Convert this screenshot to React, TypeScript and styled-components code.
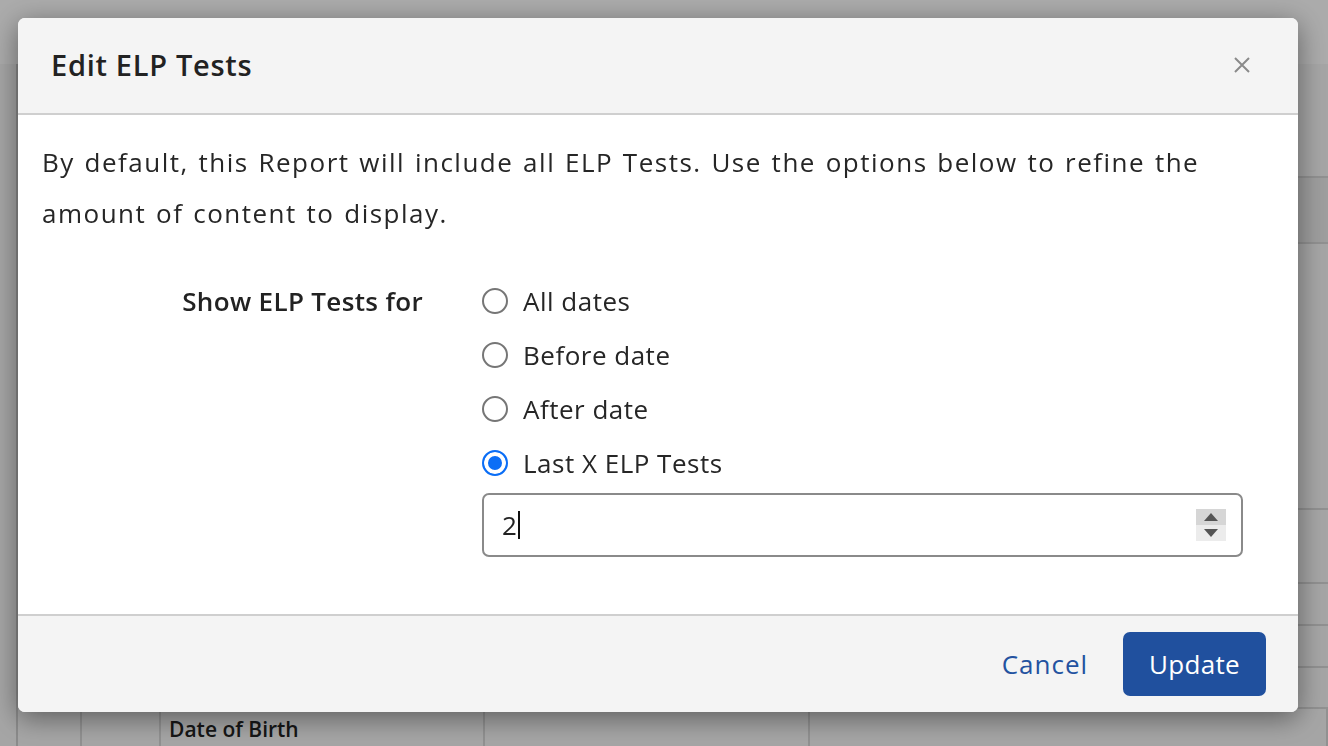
import * as React from 'react';
import styled, { createGlobalStyle } from 'styled-components';

const GlobalStyle = createGlobalStyle`
  html, body {
    margin: 0;
    padding: 0;
    height: 100%;
    overflow: hidden;
  }
  body {
    font-family: "Open Sans", Lato, "Liberation Sans", sans-serif;
    color: #222;
    background: #fff;
  }
`;

const Page = styled.div`
  height: 746px;
  display: flex;
  flex-direction: column;
  background: #f7f7f7;
`;

const TopBar = styled.div`
  height: 64px;
  flex: none;
  background: #fff;
`;

const Sheet = styled.div`
  flex: 1;
  margin-left: 16px;
  border-left: 2px solid #cfcfcf;
  display: flex;
  flex-direction: column;
`;

const SheetRow = styled.div<{ $h: number; $head?: boolean }>`
  height: ${p => p.$h}px;
  flex: none;
  box-sizing: border-box;
  border-bottom: 2px solid #d8d8d8;
  background: ${p => (p.$head ? '#ececec' : 'transparent')};
  display: flex;
`;

const SheetCell = styled.div<{ $w?: number }>`
  width: ${p => (p.$w ? `${p.$w}px` : 'auto')};
  flex: ${p => (p.$w ? 'none' : '1')};
  border-right: 2px solid #d8d8d8;
  padding: 6px 8px;
  font-size: 21px;
  line-height: 28px;
  font-weight: 600;
  color: #222;
  box-sizing: border-box;
`;

const Overlay = styled.div`
  position: fixed;
  inset: 0;
  background: rgba(0, 0, 0, 0.33);
`;

const Modal = styled.div`
  position: fixed;
  top: 18px;
  left: 18px;
  width: 1280px;
  border-radius: 7px;
  overflow: hidden;
  background: #fff;
  box-shadow: 0 6px 28px rgba(0, 0, 0, 0.45);
  display: flex;
  flex-direction: column;
`;

const Header = styled.div`
  height: 95px;
  display: flex;
  align-items: center;
  justify-content: space-between;
  padding: 0 47px 0 33px;
  background: #f4f4f4;
  border-bottom: 2px solid #cfcfcf;
`;

const Title = styled.h2`
  margin: 0 0 3px;
  font-size: 29px;
  font-weight: 600;
  letter-spacing: 0.7px;
  color: #222;
`;

const CloseButton = styled.button`
  width: 18px;
  height: 18px;
  margin-bottom: 2px;
  padding: 0;
  border: none;
  background: none;
  display: flex;
  align-items: center;
  justify-content: center;
  cursor: pointer;
`;

const Body = styled.div`
  padding: 22px 55px 57px 24px;
`;

const Intro = styled.p`
  margin: 0;
  font-size: 26px;
  line-height: 51px;
  letter-spacing: 1.5px;
  word-spacing: 1.5px;
  color: #262626;
  padding-right: 20px;
`;

const Form = styled.div`
  margin-top: 35px;
  display: grid;
  grid-template-columns: 381px 1fr;
  column-gap: 59px;
`;

const FieldLabel = styled.div`
  height: 54px;
  display: flex;
  align-items: center;
  justify-content: flex-end;
  font-size: 26px;
  font-weight: 600;
  letter-spacing: 0.35px;
  color: #222;
`;

const Options = styled.div`
  display: flex;
  flex-direction: column;
`;

const Option = styled.label`
  height: 54px;
  display: flex;
  align-items: center;
  gap: 15px;
  font-size: 26px;
  letter-spacing: 0.5px;
  color: #262626;
  cursor: pointer;
`;

const RadioMark = styled.span<{ $checked?: boolean }>`
  width: 26px;
  height: 26px;
  flex: none;
  box-sizing: border-box;
  border-radius: 50%;
  border: 2px solid ${p => (p.$checked ? '#0b6ef6' : '#767676')};
  background: ${p => (p.$checked ? '#0b6ef6' : '#fff')};
  box-shadow: ${p => (p.$checked ? 'inset 0 0 0 4px #fff' : 'none')};
`;

const NumberField = styled.div`
  margin-top: 3px;
  height: 64px;
  box-sizing: border-box;
  border: 2px solid #8a8a8a;
  border-radius: 7px;
  background: #fff;
  display: flex;
  align-items: center;
  padding: 0 15px 0 18px;
`;

const FieldValue = styled.span`
  font-size: 26px;
  color: #222;
`;

const Caret = styled.span`
  width: 2px;
  height: 28px;
  margin-left: 1px;
  background: #111;
`;

const Spinner = styled.div`
  margin-left: auto;
  width: 30px;
  height: 32px;
  display: flex;
  flex-direction: column;
`;

const SpinHalf = styled.div<{ $top?: boolean }>`
  flex: 1;
  display: flex;
  align-items: center;
  justify-content: center;
  background: ${p => (p.$top ? '#d6d6d6' : '#ececec')};
`;

const Footer = styled.div`
  height: 96px;
  display: flex;
  align-items: center;
  justify-content: flex-end;
  gap: 35px;
  padding: 0 32px;
  background: #f4f4f4;
  border-top: 2px solid #cfcfcf;
`;

const LinkButton = styled.button`
  border: none;
  background: none;
  padding: 0;
  font-family: inherit;
  font-size: 26px;
  letter-spacing: 1px;
  color: #2352a0;
  cursor: pointer;
`;

const PrimaryButton = styled.button`
  height: 64px;
  padding: 0 26px;
  border: none;
  border-radius: 7px;
  background: #20509e;
  color: #fff;
  font-family: inherit;
  font-size: 26px;
  letter-spacing: 0.3px;
  cursor: pointer;
`;

const options = ['All dates', 'Before date', 'After date', 'Last X ELP Tests'];

export default function App() {
  const [selected, setSelected] = React.useState(3);

  return (
    <>
      <GlobalStyle />
      <Page>
        <TopBar />
        <Sheet>
          <SheetRow $h={114} />
          <SheetRow $h={66} $head />
          <SheetRow $h={266} />
          <SheetRow $h={74} />
          <SheetRow $h={42} />
          <SheetRow $h={42} />
          <SheetRow $h={41} />
          <SheetRow $h={60}>
            <SheetCell $w={64} />
            <SheetCell $w={79} />
            <SheetCell $w={324}>Date of Birth</SheetCell>
            <SheetCell $w={325} />
            <SheetCell />
          </SheetRow>
        </Sheet>
      </Page>
      <Overlay />
      <Modal role="dialog">
        <Header>
          <Title>Edit ELP Tests</Title>
          <CloseButton aria-label="Close">
            <svg width="16" height="16" viewBox="0 0 16 16">
              <path d="M1 1 L15 15 M15 1 L1 15" stroke="#8a8a8a" strokeWidth="2" fill="none" />
            </svg>
          </CloseButton>
        </Header>
        <Body>
          <Intro>
            By default, this Report will include all ELP Tests. Use the options below to refine the amount of content to
            display.
          </Intro>
          <Form>
            <FieldLabel>Show ELP Tests for</FieldLabel>
            <Options>
              {options.map((o, i) => (
                <Option key={o} onClick={() => setSelected(i)}>
                  <RadioMark $checked={selected === i} />
                  {o}
                </Option>
              ))}
              <NumberField>
                <FieldValue>2</FieldValue>
                <Caret />
                <Spinner>
                  <SpinHalf $top>
                    <svg width="14" height="8" viewBox="0 0 14 8">
                      <path d="M7 0 L14 8 L0 8 Z" fill="#555" />
                    </svg>
                  </SpinHalf>
                  <SpinHalf>
                    <svg width="14" height="8" viewBox="0 0 14 8">
                      <path d="M0 0 L14 0 L7 8 Z" fill="#555" />
                    </svg>
                  </SpinHalf>
                </Spinner>
              </NumberField>
            </Options>
          </Form>
        </Body>
        <Footer>
          <LinkButton>Cancel</LinkButton>
          <PrimaryButton>Update</PrimaryButton>
        </Footer>
      </Modal>
    </>
  );
}
